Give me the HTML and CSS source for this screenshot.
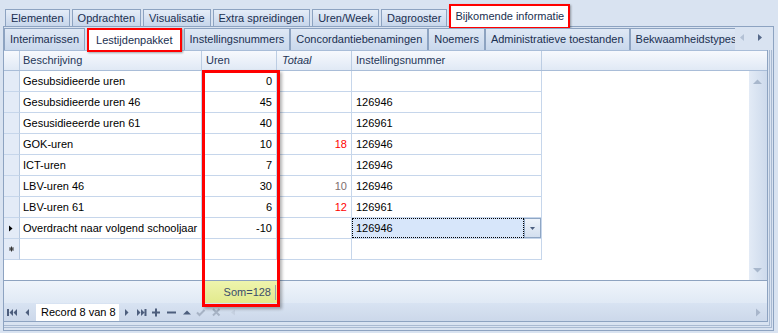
FILE: index.html
```html
<!DOCTYPE html>
<html lang="nl">
<head>
<meta charset="utf-8">
<title>Bijkomende informatie - Lestijdenpakket</title>
<link rel="stylesheet" href="styles.css">
</head>
<body>
  <div class="tabs-main">
    <span class="tab">Elementen</span>
    <span class="tab">Opdrachten</span>
    <span class="tab">Visualisatie</span>
    <span class="tab">Extra spreidingen</span>
    <span class="tab">Uren/Week</span>
    <span class="tab">Dagrooster</span>
    <span class="tab active">Bijkomende informatie</span>
  </div>

  <div class="panel">
    <div class="tabs-sub">
      <div class="tabs-sub-list">
        <span class="tab">Interimarissen</span>
        <span class="tab active">Lestijdenpakket</span>
        <span class="tab">Instellingsnummers</span>
        <span class="tab">Concordantiebenamingen</span>
        <span class="tab">Noemers</span>
        <span class="tab">Administratieve toestanden</span>
        <span class="tab">Bekwaamheidstypes</span>
      </div>
      <div class="tab-scroll">
        <svg width="38" height="22" viewBox="0 0 38 22">
          <path class="dim" d="M9 7v7L5 10.5z"/>
          <path d="M23 7v7l4-3.5z"/>
        </svg>
      </div>
    </div>

    <div class="frame1"><div class="frame2">
      <div class="grid">
        <div class="grid-head">
          <div class="cell ind"></div>
          <div class="cell first">Beschrijving</div>
          <div class="cell">Uren</div>
          <div class="cell total">Totaal</div>
          <div class="cell">Instellingsnummer</div>
          <div class="cell fill"></div>
        </div>

        <div class="grid-body">
          <div class="rows">
            <div class="row">
              <div class="cell ind"></div>
              <div class="cell first">Gesubsidieerde uren</div>
              <div class="cell num">0</div>
              <div class="cell num"></div>
              <div class="cell"></div>
            </div>
            <div class="row">
              <div class="cell ind"></div>
              <div class="cell first">Gesubsidieerde uren 46</div>
              <div class="cell num">45</div>
              <div class="cell num"></div>
              <div class="cell">126946</div>
            </div>
            <div class="row">
              <div class="cell ind"></div>
              <div class="cell first">Gesusidieeerde uren 61</div>
              <div class="cell num">40</div>
              <div class="cell num"></div>
              <div class="cell">126961</div>
            </div>
            <div class="row">
              <div class="cell ind"></div>
              <div class="cell first">GOK-uren</div>
              <div class="cell num">10</div>
              <div class="cell num over">18</div>
              <div class="cell">126946</div>
            </div>
            <div class="row">
              <div class="cell ind"></div>
              <div class="cell first">ICT-uren</div>
              <div class="cell num">7</div>
              <div class="cell num"></div>
              <div class="cell">126946</div>
            </div>
            <div class="row">
              <div class="cell ind"></div>
              <div class="cell first">LBV-uren 46</div>
              <div class="cell num">30</div>
              <div class="cell num ok">10</div>
              <div class="cell">126946</div>
            </div>
            <div class="row">
              <div class="cell ind"></div>
              <div class="cell first">LBV-uren 61</div>
              <div class="cell num">6</div>
              <div class="cell num over">12</div>
              <div class="cell">126961</div>
            </div>
            <div class="row current">
              <div class="cell ind">
                <svg width="15" height="20" viewBox="0 0 15 20"><path d="M5 7.5v6l3.5-3z"/></svg>
              </div>
              <div class="cell first">Overdracht naar volgend schooljaar</div>
              <div class="cell num">-10</div>
              <div class="cell num"></div>
              <div class="cell editing">
                <span class="editor">126946</span>
                <span class="drop">
                  <svg width="15" height="18" viewBox="0 0 15 18"><path d="M5 8h5l-2.5 3z"/></svg>
                </span>
              </div>
            </div>
            <div class="row">
              <div class="cell ind">
                <svg width="15" height="20" viewBox="0 0 15 20" class="star">
                  <path d="M7.5 7.5v5M5 10h5M5.7 8.2l3.6 3.6M9.3 8.2l-3.6 3.6"/>
                </svg>
              </div>
              <div class="cell first"></div>
              <div class="cell num"></div>
              <div class="cell num"></div>
              <div class="cell"></div>
            </div>
          </div>
          <div class="vscroll">
            <svg width="18" height="18" viewBox="0 0 18 18"><path d="M4 11h9l-4.5-4.5z"/></svg>
            <svg width="18" height="18" viewBox="0 0 18 18"><path d="M4 7h9l-4.5 4.5z"/></svg>
          </div>
        </div>

        <div class="grid-foot">
          <div class="sum"><span>Som=128</span></div>
        </div>

        <div class="navigator">
          <span class="nav-btn"><svg width="15" height="18" viewBox="0 0 15 18"><path d="M3 6h2v7H3zM9 6v7L5.5 9.5zM13 6v7L9.5 9.5z"/></svg></span>
          <span class="nav-btn"><svg width="15" height="18" viewBox="0 0 15 18"><path d="M10 6v7L6.5 9.5z"/></svg></span>
          <span class="record">Record 8 van 8</span>
          <span class="nav-btn"><svg width="15" height="18" viewBox="0 0 15 18"><path d="M6 6v7l3.5-3.5z"/></svg></span>
          <span class="nav-btn"><svg width="15" height="18" viewBox="0 0 15 18"><path d="M3 6v7l3.5-3.5zM7 6v7l3.5-3.5zM10.5 6h2v7h-2z"/></svg></span>
          <span class="nav-btn"><svg width="15" height="18" viewBox="0 0 15 18"><path d="M3 8.5h8v2H3zM6 5.5h2v8H6z"/></svg></span>
          <span class="nav-btn"><svg width="15" height="18" viewBox="0 0 15 18"><path d="M3 8.5h9v2H3z"/></svg></span>
          <span class="nav-btn"><svg width="15" height="18" viewBox="0 0 15 18"><path d="M4 11.5h8L8 7.5z"/></svg></span>
          <span class="nav-btn off"><svg width="15" height="18" viewBox="0 0 15 18"><path class="line" d="M3 9.5l2.5 2.5 5-5"/></svg></span>
          <span class="nav-btn off"><svg width="15" height="18" viewBox="0 0 15 18"><path class="line" d="M4 6l6.5 6.5M10.5 6L4 12.5"/></svg></span>
          <span class="hscroll">
            <svg width="15" height="18" viewBox="0 0 15 18" class="faint"><path d="M11 6.5v6L7 9.5z"/></svg>
            <svg width="15" height="18" viewBox="0 0 15 18" class="dim"><path d="M4 5.5v8l4.5-4z"/></svg>
          </span>
        </div>

        <div class="highlight"></div>
      </div>
    </div></div>
  </div>
</body>
</html>
```

FILE: styles.css
```css
body { margin: 0; width: 778px; height: 333px; overflow: hidden; background: #d9e3f1; font-family: "Liberation Sans", Arial, sans-serif; font-size: 11px; color: #000; }
svg { display: block; }

/* tab strips */
.tab { flex-shrink: 0; box-sizing: border-box; border: 1px solid #8da3c1; border-bottom: 0; background: linear-gradient(#e5edf8, #c7d6eb); color: #1a2f50; white-space: nowrap; }
.tab.active { position: relative; z-index: 2; border: 2px solid #f00; background: #fff; box-shadow: 1px 1px 2px rgba(0, 0, 0, .35); }

.tabs-main { position: relative; z-index: 2; display: flex; align-items: flex-end; gap: 2px; height: 26px; padding-left: 5px; }
.tabs-main .tab { height: 17px; line-height: 16px; padding: 0 5px; }
.tabs-main .tab.active { height: 25px; margin-bottom: -3px; line-height: 21px; padding: 0 4px; }

.panel { box-sizing: border-box; width: 771px; height: 305px; margin-left: 3px; border: 1px solid #8da3c1; background: #d9e3f1; }

.tabs-sub { display: flex; height: 23px; }
.tabs-sub-list { position: relative; z-index: 2; display: flex; align-items: flex-end; width: 731px; overflow-x: clip; overflow-y: visible; }
.tabs-sub .tab { height: 22px; line-height: 21px; padding: 0 5px; background: linear-gradient(#dfe8f5, #c9d8ec); }
.tabs-sub .tab.active { height: 24px; margin: 0 2px -2px; line-height: 20px; padding: 0 7px; background: #fff; }
.tab-scroll { flex: 1; }
.tab-scroll path { fill: #56698a; }
.tab-scroll path.dim { fill: #b3c1d5; }

/* nested frames round the grid */
.frame1 { margin: 0 1px 2px 0; border-right: 1px solid #a9bad2; border-bottom: 1px solid #a9bad2; }
.frame2 { margin: 0 1px 1px 0; border-right: 1px solid #a9bad2; border-bottom: 1px solid #a9bad2; }
.grid { position: relative; margin: 0 1px 3px 0; border-right: 1px solid #8da3c1; border-bottom: 1px solid #8da3c1; background: #fff; }

.cell { box-sizing: border-box; padding: 0 4px; white-space: nowrap; overflow: hidden; }
.cell.first { padding-left: 3px; }
.cell.ind { padding: 0; background: #e3ebf7; }
.cell.num { text-align: right; }

.grid-head { display: grid; grid-template-columns: 16px 182px 75px 75px 190px 225px; box-sizing: border-box; height: 21px; border-top: 1px solid #a9bdd8; border-bottom: 1px solid #a9bdd8; background: linear-gradient(#f7f9fd, #e0e9f5); color: #1f3657; }
.grid-head .cell { line-height: 19px; border-right: 1px solid #bccde3; }
.grid-head .cell.ind { background: none; }
.grid-head .cell.fill { border-right: 0; }
.grid-head .total { font-style: italic; padding-left: 5px; }

.grid-body { display: flex; height: 209px; }
.rows { flex: 1; }
.row { display: grid; grid-template-columns: 16px 182px 75px 75px 190px; height: 21px; }
.row .cell { line-height: 20px; border-right: 1px solid #c6d6eb; border-bottom: 1px solid #c6d6eb; }
.row .cell.ind { border-right-color: #b7c9e0; }
.row .ind path { fill: #000; }
.row .ind .star path { fill: none; stroke: #333; stroke-width: 1; }
.over { color: #f00; }
.ok { color: #7d6e6e; }

.cell.editing { display: flex; padding: 0; }
.editor { flex: 1; box-sizing: border-box; height: 20px; padding-left: 3px; line-height: 18px; border: 1px dotted #000; background: #d7e6fa; }
.drop { box-sizing: border-box; width: 17px; height: 20px; border: 1px solid #8fa6c4; background: linear-gradient(#eef3fa, #d3dfef); }
.drop path { fill: #4c5e7e; }

.vscroll { display: flex; flex-direction: column; justify-content: space-between; width: 18px; padding: 2px 0 1px; box-sizing: border-box; background: linear-gradient(to right, #e3ebf6, #cddaec); }
.vscroll path { fill: #a8b7cc; }

.grid-foot { height: 22px; border-top: 1px solid #8ea3c0; background: linear-gradient(#eff4fb, #e0e9f5); }
.sum { box-sizing: border-box; width: 73px; height: 22px; margin-left: 200px; padding: 4px 1px 0 0; text-align: right; background: linear-gradient(#eef4ad, #e2ea8d); color: #3b4d6b; }
.sum span { display: inline-block; line-height: 15px; padding-right: 4px; border-right: 1px solid #9aa3ae; }

.navigator { display: flex; height: 18px; background: linear-gradient(#d8e3f2, #ccd8ea); }
.nav-btn svg { fill: #4d5e7d; }
.nav-btn.off svg { fill: none; }
.nav-btn .line { stroke: #a7b3c5; stroke-width: 2; fill: none; }
.record { box-sizing: border-box; width: 83px; height: 17px; margin: 1px 0 0 2px; padding-left: 5px; line-height: 17px; background: #fff; }
.hscroll { flex: 1; display: flex; justify-content: space-between; }
.hscroll .faint path { fill: #c5d0e0; }
.hscroll .dim path { fill: #a8b6cb; }

.highlight { position: absolute; left: 198px; top: 20px; width: 78px; height: 237px; box-sizing: border-box; border: 3px solid #f00; box-shadow: 2px 2px 3px rgba(0, 0, 0, .3); pointer-events: none; }
```
